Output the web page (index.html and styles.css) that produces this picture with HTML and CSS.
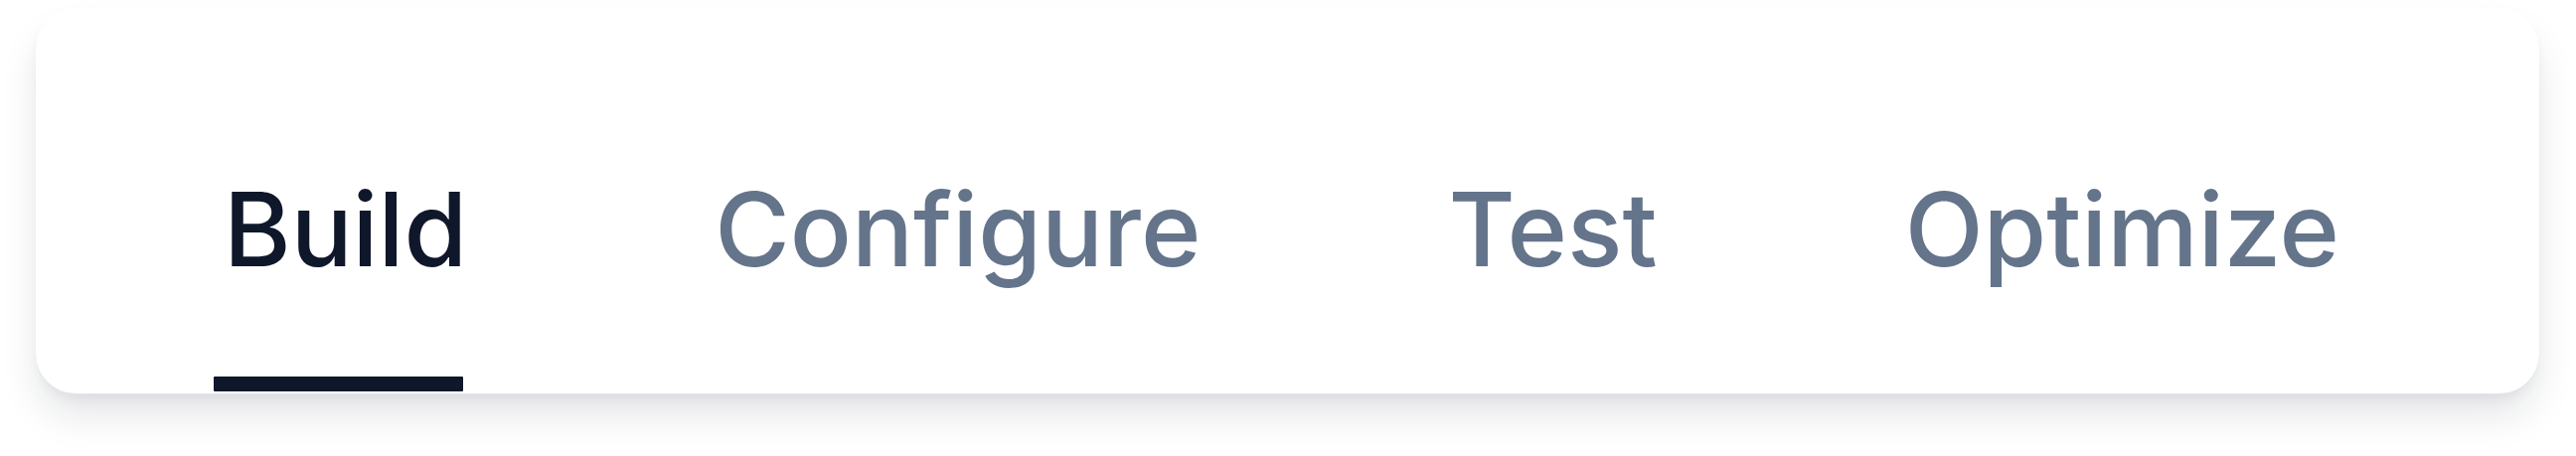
FILE: index.html
```html
<!DOCTYPE html>
<html lang="en">
<head>
<meta charset="utf-8">
<title>Tabs</title>
<link rel="stylesheet" href="styles.css">
</head>
<body>
<div class="page">
  <nav class="card" role="tablist">
    <div class="tab tab-active" role="tab" aria-selected="true">
      <span class="tab-label">Build</span>
      <span class="tab-bar"></span>
    </div>
    <div class="tab" role="tab">
      <span class="tab-label">Configure</span>
      <span class="tab-bar"></span>
    </div>
    <div class="tab" role="tab">
      <span class="tab-label">Test</span>
      <span class="tab-bar"></span>
    </div>
    <div class="tab" role="tab">
      <span class="tab-label">Optimize</span>
      <span class="tab-bar"></span>
    </div>
  </nav>
</div>
</body>
</html>
```

FILE: styles.css
```css
html, body {
  margin: 0;
  padding: 0;
  background: #ffffff;
}

.page {
  box-sizing: border-box;
  min-height: 459px;
  padding: 9px 37px 63px 36px;
}

.card {
  display: flex;
  align-items: stretch;
  gap: 239px;
  height: 387px;
  box-sizing: border-box;
  padding: 170px 0 2px 179px;
  background: #ffffff;
  border-radius: 40px;
  box-shadow:
    0 1px 0 #e2e6ee,
    0 24px 40px -4px rgba(15, 23, 42, 0.12),
    0 8px 16px -6px rgba(15, 23, 42, 0.08);
}

.tab {
  display: flex;
  flex-direction: column;
  justify-content: space-between;
}

.tab-label {
  display: block;
  padding: 0 0 0 10px;
  font-family: "Inter", "Liberation Sans", sans-serif;
  font-size: 103px;
  line-height: 103px;
  font-weight: 500;
  color: #64748b;
  white-space: nowrap;
}

.tab-bar {
  display: block;
  height: 15px;
  margin-right: 4px;
  border-radius: 1px;
  background: transparent;
}

.tab-active .tab-label {
  color: #0f172a;
}

.tab-active .tab-bar {
  background: #0f172a;
}
```
